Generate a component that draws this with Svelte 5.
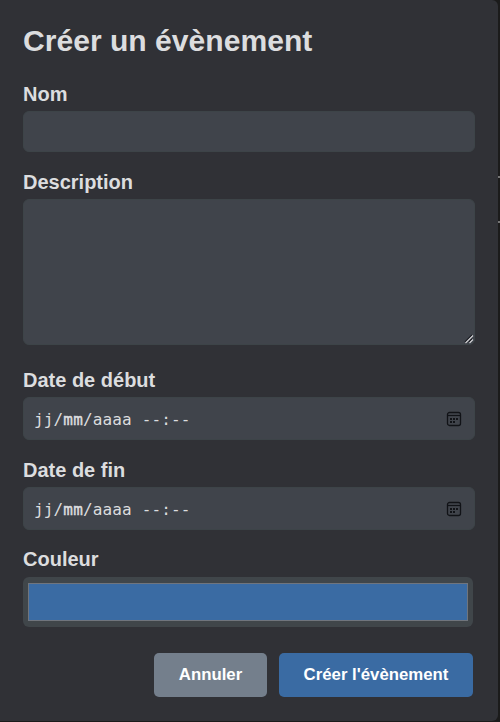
<script>
  const dates = [
    { id: 'start', label: 'Date de début' },
    { id: 'end', label: 'Date de fin' }
  ];
</script>

<div class="backdrop">
  <div class="dialog">
    <h1>Créer un évènement</h1>

    <label for="name">Nom</label>
    <input id="name" class="field name" type="text" />

    <label for="description" class="desc-label">Description</label>
    <div class="area">
      <textarea id="description" class="field"></textarea>
      <svg class="grip" width="10" height="10" viewBox="0 0 10 10">
        <path d="M1 8 8 1M5 8 8 5" stroke="#15161c" stroke-width="1.2" />
        <path d="M1.5 9 9 1.5M5.5 9 9 5.5" stroke="#d4d4d6" stroke-width="1.1" />
      </svg>
    </div>

    {#each dates as date (date.id)}
      <div class="label {date.id}">{date.label}</div>
      <div class="field date">
        <span>jj/<b>mm</b>/aaaa --:--</span>
        <svg width="16" height="16" viewBox="0 0 16 16" fill="none">
          <rect x="1.5" y="1.5" width="13" height="13" rx="2" stroke="#111317" stroke-width="1.3" />
          <path d="M1.5 4.5h13" stroke="#111317" stroke-width="1.2" />
          <path d="M4 7h2v2H4zM7 7h2v2H7zM10 7h2v2h-2zM4 10h2v2H4zM7 10h2v2H7z" fill="#111317" />
        </svg>
      </div>
    {/each}

    <div class="label color-label">Couleur</div>
    <div class="color"><div class="swatch"></div></div>

    <div class="actions">
      <button class="cancel">Annuler</button>
      <button class="submit">Créer l'évènement</button>
    </div>
  </div>
  <div class="edge"><i></i><i></i></div>
</div>

<style>
  .backdrop {
    display: flex;
    width: 500px;
    height: 722px;
    overflow: hidden;
    background: #1b1b1b;
    font-family: "Liberation Sans", Arial, sans-serif;
    color: #dcdddf;
  }
  .dialog {
    box-sizing: border-box;
    display: flex;
    flex-direction: column;
    flex: none;
    width: 498px;
    height: 721px;
    padding: 23px 23px 0;
    background: #303136;
    border-radius: 0 6px 6px 0;
  }
  h1 {
    margin: 0;
    height: 59px;
    font-size: 30.1px;
    line-height: 36px;
    white-space: nowrap;
  }
  label,
  .label {
    flex: none;
    height: 29px;
    font-size: 20px;
    line-height: 24px;
    font-weight: bold;
  }
  .field {
    box-sizing: border-box;
    flex: none;
    width: 452px;
    margin: 0;
    padding: 0 12px;
    border: 1px solid #3d4448;
    border-radius: 6px;
    background: #40444b;
    color: inherit;
    outline: none;
  }
  .name {
    height: 41px;
  }
  .desc-label {
    margin-top: 18px;
  }
  .area {
    position: relative;
    width: 452px;
    height: 146px;
  }
  textarea.field {
    display: block;
    height: 146px;
    resize: none;
  }
  .grip {
    position: absolute;
    right: 1px;
    bottom: 1px;
  }
  .start {
    margin-top: 23px;
  }
  .end {
    margin-top: 18px;
  }
  .date {
    display: flex;
    align-items: center;
    justify-content: space-between;
    height: 43px;
    padding: 1px 12px 0 10px;
    font-family: "DejaVu Sans Mono", monospace;
    font-size: 16px;
    letter-spacing: 0.15px;
    white-space: pre;
  }
  .date b {
    font-weight: normal;
    -webkit-text-stroke: 0.4px currentColor;
  }
  .color-label {
    margin-top: 17px;
    height: 30px;
  }
  .color {
    box-sizing: border-box;
    width: 450px;
    height: 50px;
    padding: 6px 5px;
    border-radius: 6px;
    background: #40464a;
  }
  .swatch {
    box-sizing: border-box;
    height: 38px;
    border: 1px solid #70757d;
    background: #3a6ba3;
  }
  .actions {
    display: flex;
    justify-content: flex-end;
    gap: 12px;
    width: 450px;
    margin-top: 26px;
  }
  button {
    height: 44px;
    padding: 0;
    border: 0;
    border-radius: 5px;
    color: #fff;
    font: bold 16.8px "Liberation Sans", Arial, sans-serif;
  }
  .cancel {
    width: 113px;
    background: #747f8c;
  }
  .submit {
    width: 194px;
    background: #3a6ba3;
  }
  .edge {
    display: flex;
    flex-direction: column;
    gap: 43px;
    width: 2px;
    padding-top: 176px;
  }
  .edge i {
    height: 2px;
    background: #747474;
  }
</style>
